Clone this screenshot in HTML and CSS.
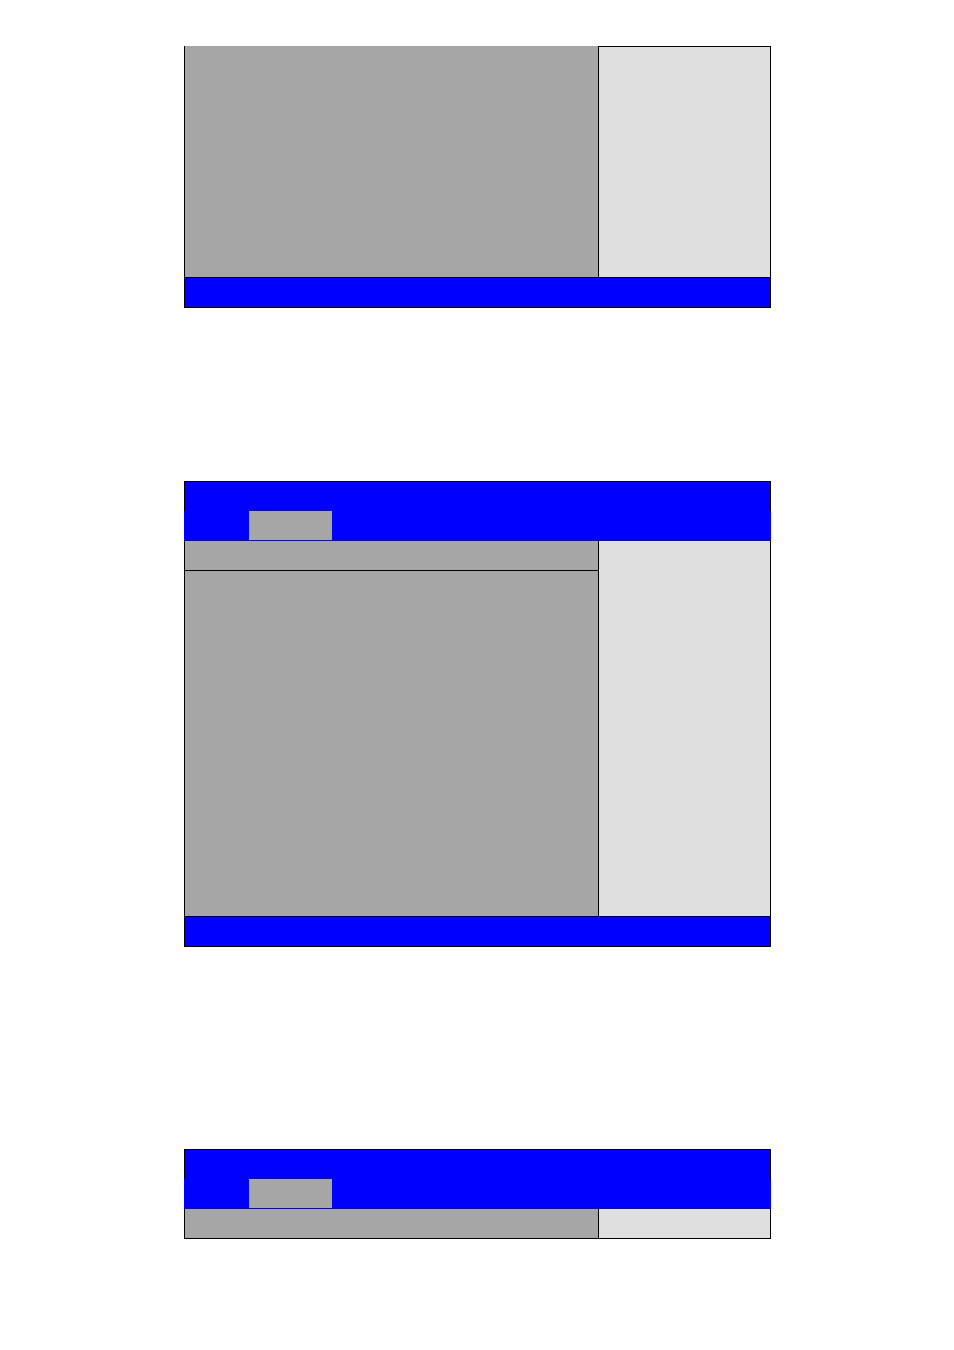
FILE: index.html
```html
<!DOCTYPE html>
<html lang="en">
<head>
    <meta charset="UTF-8">
    <meta name="viewport" content="width=device-width, initial-scale=1.0">
    <title>Setup Screens</title>
    <link rel="stylesheet" href="styles.css">
</head>
<body>
    <!-- Screen 1: plain page with help pane -->
    <div class="screen">
        <div class="body body-tall">
            <div class="main"></div>
            <div class="help help-top"></div>
        </div>
        <div class="status"></div>
    </div>

    <!-- Screen 2: title, menu tab and settings list -->
    <div class="screen screen-second">
        <div class="title"></div>
        <div class="menubar">
            <div class="tab"></div>
        </div>
        <div class="body body-list">
            <div class="main">
                <div class="subhead"></div>
            </div>
            <div class="help"></div>
        </div>
        <div class="status"></div>
    </div>

    <!-- Screen 3: header only -->
    <div class="screen screen-third">
        <div class="title"></div>
        <div class="menubar">
            <div class="tab"></div>
        </div>
        <div class="body body-row">
            <div class="main"></div>
            <div class="help"></div>
        </div>
    </div>
</body>
</html>
```

FILE: styles.css
```css
* {
    box-sizing: border-box;
}
body {
    margin: 0;
    padding-top: 46px;
    background: #fff;
    font-family: 'Liberation Sans', Arial, sans-serif;
}
.screen {
    width: 587px;
    margin-left: 184px;
}
.screen-second {
    margin-top: 173px;
}
.screen-third {
    margin-top: 202px;
}
.title {
    height: 30px;
    background: #0000ff;
    border: 1px solid #000;
    border-bottom: none;
}
.menubar {
    height: 30px;
    background: #0000ff;
    padding-left: 65px;
}
.tab {
    width: 83px;
    height: 29px;
    background: #a6a6a6;
}
.body {
    display: flex;
    border-left: 1px solid #000;
    border-right: 1px solid #000;
}
.body-tall {
    height: 231px;
}
.body-list {
    height: 375px;
}
.body-row {
    height: 30px;
    border-bottom: 1px solid #000;
}
.main {
    flex: 1;
    background: #a6a6a6;
}
.subhead {
    height: 30px;
    border-bottom: 1px solid #000;
}
.help {
    width: 172px;
    background: #dfdfdf;
    border-left: 1px solid #000;
}
.help-top {
    border-top: 1px solid #000;
}
.status {
    height: 31px;
    background: #0000ff;
    border: 1px solid #000;
}
```
